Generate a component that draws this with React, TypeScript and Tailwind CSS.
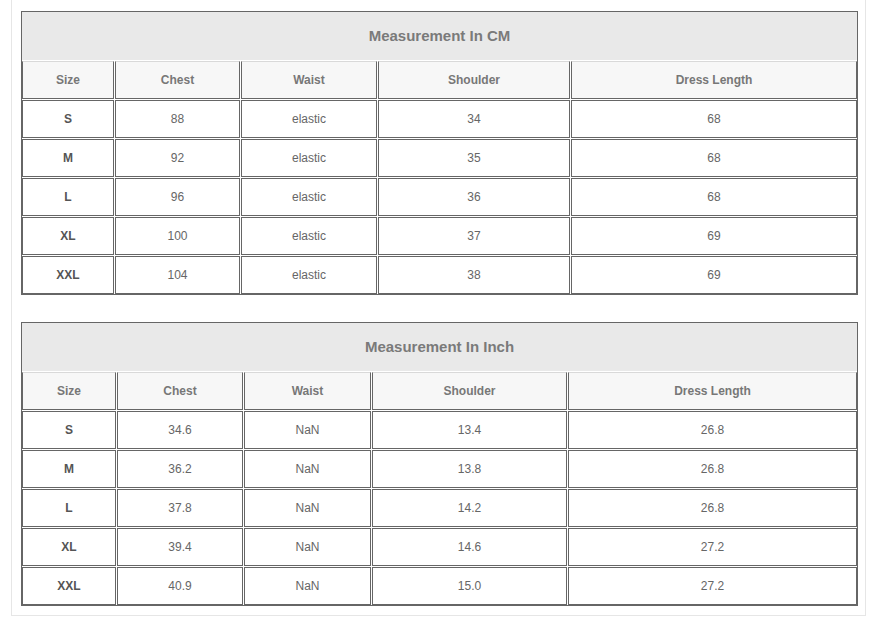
const cm = {
  title: "Measurement In CM",
  cols: "grid-cols-[92px_125px_136px_192px_286px]",
  rows: [
    ["S", "88", "elastic", "34", "68"],
    ["M", "92", "elastic", "35", "68"],
    ["L", "96", "elastic", "36", "68"],
    ["XL", "100", "elastic", "37", "69"],
    ["XXL", "104", "elastic", "38", "69"],
  ],
};

const inch = {
  title: "Measurement In Inch",
  cols: "grid-cols-[94px_126px_127px_195px_289px]",
  rows: [
    ["S", "34.6", "NaN", "13.4", "26.8"],
    ["M", "36.2", "NaN", "13.8", "26.8"],
    ["L", "37.8", "NaN", "14.2", "26.8"],
    ["XL", "39.4", "NaN", "14.6", "27.2"],
    ["XXL", "40.9", "NaN", "15.0", "27.2"],
  ],
};

const headers = ["Size", "Chest", "Waist", "Shoulder", "Dress Length"];

function SizeTable({ data }: { data: typeof cm }) {
  return (
    <div className={`grid ${data.cols} gap-px border border-[#666] bg-white`}>
      <div className="col-span-5 flex h-[48px] items-center justify-center bg-[#e9e9e9] text-[15px] font-bold text-[#7a7a7a]">
        {data.title}
      </div>
      {headers.map((h) => (
        <div
          key={h}
          className="flex h-[38px] items-center justify-center border border-[#666] border-t-[#d9d9d9] bg-[#f7f7f7] text-[12px] font-bold text-[#777]"
        >
          {h}
        </div>
      ))}
      {data.rows.map((row) =>
        row.map((v, i) => (
          <div
            key={row[0] + i}
            className={`flex h-[38px] items-center justify-center border border-[#666] bg-white text-[12px] ${
              i === 0 ? "font-bold text-[#555]" : "text-[#666]"
            }`}
          >
            {v}
          </div>
        ))
      )}
    </div>
  );
}

export default function App() {
  return (
    <div className="min-h-[624px] bg-white font-['Liberation_Sans',Arial,sans-serif]">
      <div className="ml-[11px] w-[855px] border-x border-b border-[#e6e6e6] pt-[11px] pb-[9px] pl-[9px] pr-[7px]">
        <div className="flex flex-col gap-[27px]">
          <SizeTable data={cm} />
          <SizeTable data={inch} />
        </div>
      </div>
    </div>
  );
}
